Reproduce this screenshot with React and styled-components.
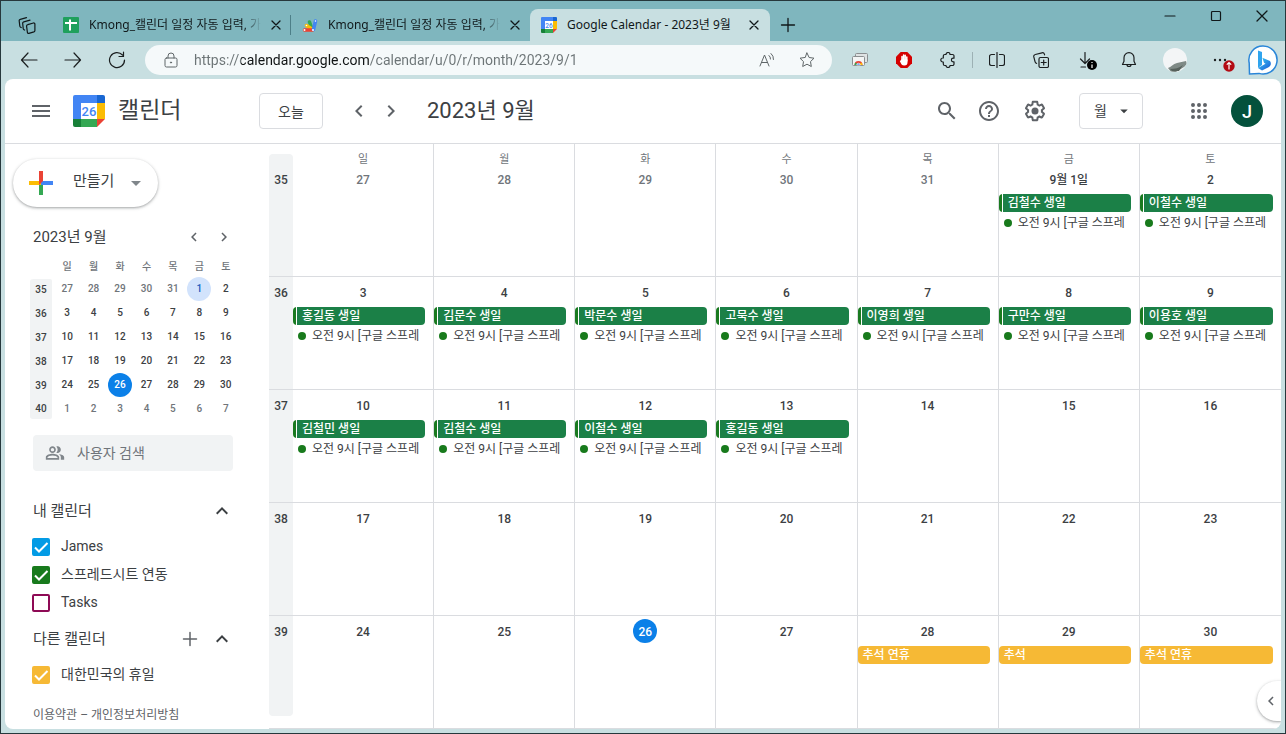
import React from "react";
import styled, { createGlobalStyle } from "styled-components";

const GlobalStyle = createGlobalStyle`
  * { box-sizing: border-box; }
  body { margin: 0; font-family: Roboto, "Noto Sans CJK KR", sans-serif; color: #3c4043; }
  button, input, select { font: inherit; color: inherit; }
  button { border: 0; padding: 0; background: none; cursor: pointer; }
  svg { display: block; flex: none; }
`;

/* ---------- browser window ---------- */

const Window = styled.div`
  display: flex;
  flex-direction: column;
  min-height: 100vh;
  border: 1px solid #26383c;
  background: #c8dfe1;
`;

const TabStrip = styled.div`
  display: flex;
  align-items: stretch;
  height: 40px;
  background: #7fb6be;
  color: #10181a;
  font: 12px/16px "Noto Sans", "Noto Sans CJK KR", sans-serif;
`;

const StripButton = styled.button`
  display: grid;
  place-items: center;
  width: ${(p) => p.$width}px;
`;

const WorkspaceButton = styled(StripButton)`
  padding-top: 8px;
`;

const NewTabButton = styled(StripButton)`
  padding-top: 8px;
`;

const Tab = styled.div`
  display: flex;
  align-items: center;
  gap: 10px;
  flex: 0 1 ${(p) => (p.$active ? 240 : 239)}px;
  min-width: 0;
  margin-top: ${(p) => (p.$active ? 8 : 0)}px;
  padding: ${(p) => (p.$active ? "0 11px" : "8px 10px 0 11px")};
  border-radius: 8px 8px 0 0;
  background: ${(p) => (p.$active ? "#c8dfe1" : "transparent")};
`;

const TabTitle = styled.span`
  flex: 1;
  overflow: hidden;
  white-space: nowrap;
  mask-image: ${(p) => (p.$fade ? "linear-gradient(to right, #000 90%, transparent 100%)" : "none")};
`;

const TabDivider = styled.div`
  width: 1px;
  height: 20px;
  margin: 14px 0 0 -1px;
  background: #4d7f88;
`;

const WindowControls = styled.div`
  display: flex;
  height: 30px;
  margin-left: auto;
`;

const Toolbar = styled.div`
  display: flex;
  align-items: center;
  height: 38px;
  padding-left: 6px;
  color: #1b1f20;
`;

const ToolButton = styled.button`
  position: relative;
  display: grid;
  place-items: center;
  flex: none;
  width: ${(p) => p.$width || 44}px;
  height: 36px;
`;

const ToolDivider = styled.div`
  width: 1px;
  height: 16px;
  margin: 0 2px;
  background: #9db1b4;
`;

const Badge = styled.span`
  position: absolute;
  left: ${(p) => p.$left || 22}px;
  top: 18px;
`;

const AddressBar = styled.div`
  display: flex;
  align-items: center;
  flex: 1;
  min-width: 0;
  height: 30px;
  margin: 0 6px;
  padding: 0 17px 0 18px;
  border-radius: 15px;
  background: #f5f9fa;
  color: #5f6668;
`;

const AddressInput = styled.input`
  flex: 1;
  min-width: 0;
  margin: 0 15px;
  padding: 0;
  border: 0;
  outline: 0;
  font: 14px/20px Roboto, sans-serif;
  color: transparent;
  background: linear-gradient(to right, #6c7476 47px, #101415 47px, #101415 176px, #6c7476 176px);
  background-clip: text;
  -webkit-background-clip: text;
`;

const AddressAction = styled.button`
  display: grid;
  place-items: center;
  width: 16px;
  height: 24px;
  margin-left: ${(p) => p.$gap || 0}px;
`;

/* ---------- calendar page ---------- */

const Page = styled.div`
  position: relative;
  display: flex;
  flex-direction: column;
  flex: 1;
  margin: 0 4px 4px;
  border-radius: 8px;
  background: #fff;
  overflow: hidden;
`;

const Header = styled.header`
  display: flex;
  align-items: center;
  height: 65px;
  border-bottom: 1px solid #dadce0;
  color: #5f6368;
`;

const Brand = styled.div`
  display: flex;
  align-items: center;
  flex: none;
  width: 254px;
  padding-left: 12px;
`;

const BrandName = styled.span`
  margin-left: 13px;
  font-size: 23px;
  line-height: 28px;
  color: #3c4043;
`;

const IconButton = styled.button`
  display: grid;
  place-items: center;
  flex: none;
  width: ${(p) => p.$size}px;
  height: ${(p) => p.$size}px;
  color: ${(p) => p.$color || "#5f6368"};
`;

const LogoSlot = styled.span`
  margin-left: 8px;
`;

const TodayButton = styled.button`
  width: 64px;
  height: 36px;
  border: 1px solid #dadce0;
  border-radius: 4px;
  font-size: 14px;
  color: #3c4043;
`;

const Pager = styled.div`
  display: flex;
  margin: 0 20px;
`;

const MonthTitle = styled.h1`
  flex: 1;
  margin: 0;
  font-size: 22px;
  line-height: 28px;
  font-weight: 400;
  white-space: nowrap;
  color: #3c4043;
`;

const HeaderActions = styled.div`
  display: grid;
  grid-template-columns: 42px 46px 40px;
  margin-right: 24px;
`;

const ViewPicker = styled.div`
  display: grid;
  align-items: center;
  width: 64px;
  margin-right: 36px;
  color: #3c4043;

  > * { grid-area: 1 / 1; }
  > svg { justify-self: end; margin-right: 10px; pointer-events: none; }
`;

const ViewSelect = styled.select`
  appearance: none;
  width: 100%;
  height: 36px;
  padding: 0 14px;
  border: 1px solid #dadce0;
  border-radius: 4px;
  background: #fff;
  font-size: 14px;
`;

const Account = styled.button`
  width: 32px;
  height: 32px;
  margin: 0 18px 0 12px;
  border-radius: 50%;
  background: #04513c;
  color: #fff;
  font-size: 18px;
  font-weight: 500;
`;

const Body = styled.div`
  display: flex;
  flex: 1;
`;

const Sidebar = styled.aside`
  flex: none;
  width: 264px;
  padding: 15px 30px 0 25px;
`;

const CreateButton = styled.button`
  display: flex;
  align-items: center;
  width: 145px;
  height: 48px;
  margin-left: -17px;
  padding-left: 12px;
  border-radius: 24px;
  background: #fff;
  box-shadow: 0 1px 2px rgba(60, 64, 67, 0.3), 0 1px 3px 1px rgba(60, 64, 67, 0.15);
  font-size: 15px;
  line-height: 20px;
  color: #3c4043;
`;

const CreateLabel = styled.span`
  flex: 1;
  margin-left: 16px;
  padding-bottom: 4px;
  text-align: left;
`;

const CreateCaret = styled.span`
  margin-right: 10px;
  color: #80868b;
`;

const MiniHeader = styled.div`
  display: flex;
  align-items: center;
  height: 28px;
  margin: 16px 0 0 3px;
`;

const MiniTitle = styled.h2`
  flex: 1;
  margin: 0;
  font-size: 15px;
  line-height: 20px;
  font-weight: 400;
`;

const MiniTable = styled.table`
  width: 100%;
  table-layout: fixed;
  border-spacing: 0;
  text-align: center;
  font-size: 10px;
  line-height: 24px;
  font-weight: 500;

  th, td { padding: 0; }
  thead th { height: 26px; padding-top: 6px; font-weight: 500; line-height: 20px; color: #70757a; }
  thead th:first-child { width: 24px; }
`;

const MiniWeek = styled.th`
  border: 0 solid transparent;
  border-right-width: 2px;
  background: #f1f3f4;
  background-clip: padding-box;
  font-weight: 500;

  && { padding-top: 2px; line-height: 22px; }
  tr:first-child > && { border-top-width: 2px; border-radius: 4px 4px 0 0; padding-top: 0; }
  tr:last-child > && { border-bottom-width: 2px; border-radius: 0 0 4px 4px; padding-top: 2px; line-height: 20px; }
`;

const miniTone = {
  plain: { bg: "transparent", fg: "#3c4043" },
  muted: { bg: "transparent", fg: "#70757a" },
  selected: { bg: "#d2e3fc", fg: "#185abc" },
  today: { bg: "#0b80e8", fg: "#fff" },
};

const MiniDay = styled.button`
  display: block;
  width: 24px;
  height: 24px;
  margin: 0 auto;
  border-radius: 50%;
  background: ${(p) => miniTone[p.$tone].bg};
  color: ${(p) => miniTone[p.$tone].fg};
`;

const PeopleSearch = styled.label`
  display: flex;
  align-items: center;
  gap: 12px;
  width: 200px;
  height: 36px;
  margin: 14px 0 24px 3px;
  padding-left: 12px;
  border-radius: 4px;
  background: #f1f3f4;
  color: #80868b;
`;

const PeopleInput = styled.input`
  flex: 1;
  min-width: 0;
  padding: 0;
  border: 0;
  outline: 0;
  background: none;
  font-size: 14px;
  &::placeholder { color: #70757a; opacity: 1; }
`;

const SectionHeader = styled.div`
  display: flex;
  align-items: center;
  height: 32px;
  margin: 0 0 6px 3px;
  padding-right: 1px;
`;

const SectionTitle = styled.h2`
  flex: 1;
  margin: 0;
  font-size: 15px;
  line-height: 20px;
  font-weight: 400;
`;

const CalendarList = styled.ul`
  margin: 0 0 6px;
  padding: 0 0 0 2px;
  list-style: none;
`;

const CalendarItem = styled.label`
  display: flex;
  align-items: center;
  gap: 11px;
  height: 28px;
  font-size: 14px;
  line-height: 20px;
`;

const CalendarName = styled.span`
  padding-bottom: 2px;
`;

const CheckSlot = styled.span`
  display: grid;
  > * { grid-area: 1 / 1; }
  > svg { pointer-events: none; }
`;

const CheckInput = styled.input`
  appearance: none;
  width: 18px;
  height: 18px;
  margin: 0;
  border: 2px solid ${(p) => p.$color};
  border-radius: 2px;
  &:checked { background: ${(p) => p.$color}; }
  &:not(:checked) + svg { visibility: hidden; }
`;

const Legal = styled.div`
  margin: 18px 0 6px 3px;
  font-size: 12px;
  line-height: 16px;
  white-space: nowrap;
  color: #5f6368;
  a { color: inherit; text-decoration: none; }
`;

/* ---------- month grid ---------- */

const MonthPane = styled.main`
  flex: 1;
  min-width: 0;
`;

const MonthTable = styled.table`
  width: 100%;
  table-layout: fixed;
  border-spacing: 0;

  th, td { padding: 0; vertical-align: top; }
`;

const WeekColumn = styled.col`
  width: 24px;
`;

const DayHead = styled.th`
  height: 20px;
  border-right: 1px solid #dadce0;
  font-size: 11px;
  line-height: 8px;
  font-weight: 400;
  color: #70757a;
  && { padding-top: 12px; }
  &:last-child { border-right: 0; }
`;

const WeekHead = styled.th`
  && { padding-top: 10px; }
`;

const WeekCap = styled.div`
  height: 10px;
  border-radius: 4px 4px 0 0;
  background: #f1f3f4;
`;

const WeekCell = styled.th`
  border-bottom: 1px solid #dadce0;
`;

const WeekNumber = styled.div`
  height: 112px;
  padding-top: 4px;
  background: #f1f3f4;
  font-size: 12px;
  line-height: 24px;
  font-weight: 500;

  tr:last-child & { height: 100px; border-radius: 0 0 4px 4px; }
`;

const DayCell = styled.td`
  height: 113px;
  border-right: 1px solid #dadce0;
  border-bottom: 1px solid #dadce0;
  &:last-child { border-right: 0; }
`;

const DayNumber = styled.div`
  width: max-content;
  min-width: 24px;
  height: 24px;
  margin: 3px auto;
  border-radius: 12px;
  text-align: center;
  font-size: 12px;
  line-height: 26px;
  font-weight: 500;
  color: ${(p) => (p.$today ? "#fff" : p.$muted ? "#70757a" : "#3c4043")};
  background: ${(p) => (p.$today ? "#0b80e8" : "transparent")};
`;

const EventChip = styled.button`
  display: block;
  width: calc(100% - 8px);
  height: 18px;
  margin-bottom: 2px;
  padding-left: ${(p) => (p.$holiday ? 5 : 9)}px;
  border-radius: 4px;
  background: ${(p) =>
    p.$holiday
      ? "#f6b935"
      : "linear-gradient(to right, #1a7a20 3px, #fff 3px, #fff 4px, #1b8047 4px)"};
  color: #fff;
  font-size: 12px;
  line-height: 16px;
  font-weight: 500;
  text-align: left;
`;

const TimedEvent = styled.button`
  display: flex;
  align-items: center;
  gap: 6px;
  width: calc(100% - 8px);
  height: 18px;
  padding: 0 4px 0 5px;
  font-size: 12px;
  line-height: 16px;
  text-align: left;

  &::before {
    content: "";
    flex: none;
    width: 8px;
    height: 8px;
    border-radius: 50%;
    background: #187a1c;
  }
`;

const TimedText = styled.span`
  overflow: hidden;
  white-space: nowrap;
`;

const PanelToggle = styled.button`
  position: absolute;
  right: 0;
  bottom: 8px;
  display: grid;
  place-items: center;
  width: 24px;
  height: 40px;
  padding-left: 4px;
  border-radius: 20px 0 0 20px;
  background: #fff;
  box-shadow: 0 1px 2px rgba(60, 64, 67, 0.3), 0 1px 3px 1px rgba(60, 64, 67, 0.15);
  color: #5f6368;
`;

/* ---------- icons ---------- */

const Material = ({ d, size = 24, children }) => (
  <svg width={size} height={size} viewBox="0 0 24 24" fill="currentColor" aria-hidden="true">
    <path d={d} />
    {children}
  </svg>
);

const Line = ({ d, size = 16, width = 1.2, children }) => (
  <svg width={size} height={size} viewBox={`0 0 ${size} ${size}`} fill="none" stroke="currentColor"
    strokeWidth={width} strokeLinecap="round" strokeLinejoin="round" aria-hidden="true">
    <path d={d} />
    {children}
  </svg>
);

const paths = {
  menu: "M3 18h18v-2H3v2zm0-5h18v-2H3v2zm0-7v2h18V6H3z",
  left: "M15.41 7.41 14 6l-6 6 6 6 1.41-1.41L10.83 12z",
  right: "M10 6 8.59 7.41 13.17 12l-4.58 4.59L10 18l6-6z",
  up: "M12 8l-6 6 1.41 1.41L12 10.83l4.59 4.58L18 14z",
  caret: "M7 10l5 5 5-5z",
  search:
    "M15.5 14h-.79l-.28-.27C15.41 12.59 16 11.11 16 9.5 16 5.91 13.09 3 9.5 3S3 5.91 3 9.5 5.91 16 9.5 16c1.61 0 3.09-.59 4.23-1.57l.27.28v.79l5 4.99L20.49 19l-4.99-5zm-6 0C7.01 14 5 11.99 5 9.5S7.01 5 9.5 5 14 7.01 14 9.5 11.99 14 9.5 14z",
  help:
    "M11 18h2v-2h-2v2zm1-16C6.48 2 2 6.48 2 12s4.48 10 10 10 10-4.48 10-10S17.52 2 12 2zm0 18c-4.41 0-8-3.59-8-8s3.59-8 8-8 8 3.59 8 8-3.59 8-8 8zm0-14c-2.21 0-4 1.79-4 4h2c0-1.1.9-2 2-2s2 .9 2 2c0 2-3 1.75-3 5h2c0-2.25 3-2.5 3-5 0-2.21-1.79-4-4-4z",
  settings:
    "M13.85 22.25h-3.7c-.74 0-1.36-.54-1.45-1.27l-.27-1.89c-.27-.14-.53-.29-.79-.46l-1.8.72c-.7.26-1.47-.03-1.81-.65L2.2 15.53c-.35-.66-.2-1.44.36-1.88l1.53-1.19c-.01-.15-.02-.3-.02-.46 0-.15.01-.31.02-.46l-1.52-1.19c-.59-.45-.74-1.26-.37-1.88l1.85-3.19c.34-.62 1.11-.9 1.79-.63l1.81.73c.26-.17.52-.32.78-.46l.27-1.91c.09-.7.71-1.25 1.44-1.25h3.7c.74 0 1.36.54 1.45 1.27l.27 1.89c.27.14.53.29.79.46l1.8-.72c.71-.26 1.48.03 1.82.65l1.84 3.18c.36.66.2 1.44-.36 1.88l-1.52 1.19c.01.15.02.3.02.46s-.01.31-.02.46l1.52 1.19c.56.45.72 1.23.37 1.86l-1.86 3.22c-.34.62-1.11.9-1.8.63l-1.8-.72c-.26.17-.52.32-.78.46l-.27 1.91c-.1.68-.72 1.22-1.46 1.22zm-3.23-2h2.76l.37-2.55.53-.22c.44-.18.88-.44 1.34-.78l.45-.34 2.38.96 1.38-2.4-2.03-1.58.07-.56c.03-.26.06-.51.06-.78s-.03-.53-.06-.78l-.07-.56 2.03-1.58-1.39-2.4-2.39.96-.45-.35c-.42-.32-.87-.58-1.33-.77l-.52-.22-.37-2.55h-2.76l-.37 2.55-.53.21c-.44.19-.88.44-1.34.79l-.45.33-2.38-.95-1.39 2.39 2.03 1.58-.07.56a7 7 0 0 0-.06.79c0 .26.02.53.06.78l.07.56-2.03 1.58 1.38 2.4 2.39-.96.45.35c.43.33.86.58 1.33.77l.53.22.38 2.55z",
  apps:
    "M6 8a2 2 0 1 0 0-4 2 2 0 0 0 0 4zm6 12a2 2 0 1 0 0-4 2 2 0 0 0 0 4zm-6 0a2 2 0 1 0 0-4 2 2 0 0 0 0 4zm0-6a2 2 0 1 0 0-4 2 2 0 0 0 0 4zm6 0a2 2 0 1 0 0-4 2 2 0 0 0 0 4zm6-10a2 2 0 1 0 0 4 2 2 0 0 0 0-4zm-6 4a2 2 0 1 0 0-4 2 2 0 0 0 0 4zm6 6a2 2 0 1 0 0-4 2 2 0 0 0 0 4zm0 6a2 2 0 1 0 0-4 2 2 0 0 0 0 4z",
  people:
    "M16.67 13.13C18.04 14.06 19 15.32 19 17v3h4v-3c0-2.18-3.57-3.47-6.33-3.87zM15 12c2.21 0 4-1.79 4-4s-1.79-4-4-4c-.47 0-.91.1-1.33.24a5.98 5.98 0 0 1 0 7.52c.42.14.86.24 1.33.24zM9 12c2.21 0 4-1.79 4-4s-1.79-4-4-4-4 1.79-4 4 1.79 4 4 4zm0-6c1.1 0 2 .9 2 2s-.9 2-2 2-2-.9-2-2 .9-2 2-2zm0 7c-2.67 0-8 1.34-8 4v3h16v-3c0-2.66-5.33-4-8-4zm6 5H3v-.99C3.2 16.29 6.3 15 9 15s5.8 1.29 6 2v1z",
};

const CalendarLogo = ({ size }) => (
  <svg width={size} height={size} viewBox="0 0 32 32" aria-hidden="true">
    <path fill="#4285f4" d="M2 0h22v8H8v16H0V2a2 2 0 0 1 2-2z" />
    <path fill="#1967d2" d="M24 0h6a2 2 0 0 1 2 2v6h-8z" />
    <path fill="#fbbc04" d="M24 8h8v16h-8z" />
    <path fill="#34a853" d="M8 24h16v8H8z" />
    <path fill="#188038" d="M0 24h8v8H2a2 2 0 0 1-2-2z" />
    <path fill="#ea4335" d="M24 24h8l-8 8z" />
    <path fill="#fff" d="M8 8h16v16H8z" />
    <text x="16" y="21" textAnchor="middle" fontFamily="Roboto, sans-serif" fontSize="13" fontWeight="500" fill="#4285f4">26</text>
  </svg>
);

const SheetsLogo = () => (
  <svg width="16" height="16" viewBox="0 0 16 16" aria-hidden="true">
    <rect width="16" height="16" rx="1" fill="#1fa05d" />
    <path fill="#fff" d="M6 2.5h2V5h6v2H8v6.500H6V7H2V5h4z" />
  </svg>
);

const ScriptLogo = () => (
  <svg width="16" height="16" viewBox="0 0 16 16" strokeLinecap="round" strokeWidth="3.500" aria-hidden="true">
    <path stroke="#34a853" d="M7.500 5l2.500 7" />
    <path stroke="#fbbc04" d="M4.500 8.500l6 4" />
    <path stroke="#ea4335" d="M2.500 13h8" />
    <path stroke="#4285f4" d="M13.500 4l-2 8.500" />
    <circle cx="11" cy="13" r="1" fill="#fff" />
    <circle cx="2.500" cy="13" r="1" fill="#fff" />
    <circle cx="4.500" cy="8.500" r=".8" fill="#fff" />
    <circle cx="13.500" cy="4" r=".8" fill="#fff" />
  </svg>
);

const CaptureLogo = () => (
  <svg width="16" height="16" viewBox="0 0 16 16" fill="none" aria-hidden="true">
    <rect x="3.500" y="1.500" width="12" height="9" rx="1" fill="#dfe3e4" stroke="#8b8f91" />
    <rect x=".5" y="4.500" width="12" height="9" rx="1" fill="#f3f5f5" stroke="#8b8f91" />
    <path d="M2.500 13a4 4 0 0 1 8 0z" fill="#ea4335" />
    <path d="M2.500 13a4 4 0 0 1 1-2.600l3 2.600z" fill="#34a853" />
    <path d="M10.500 13a4 4 0 0 0-1-2.600l-3 2.600z" fill="#fbbc04" />
    <path d="M4.700 13a1.800 1.800 0 0 1 3.600 0z" fill="#4285f4" stroke="#fff" strokeWidth=".6" />
  </svg>
);

const BlockerLogo = () => (
  <svg width="16" height="16" viewBox="0 0 16 16" aria-hidden="true">
    <path d="M4.700 0h6.600L16 4.700v6.600L11.300 16H4.700L0 11.300V4.700z" fill="#d50000" />
    <path d="M6 9V4.500M7.600 8V3M9.200 8V3.300M10.800 9V5" stroke="#fff" strokeWidth="1.500" strokeLinecap="round" />
    <path d="M5.300 7.500h6.200v3a3 3 0 0 1-3 3H8c-1.500 0-2.500-.8-3-2L3.800 8.900l.8-.5z" fill="#fff" />
  </svg>
);

const BingLogo = () => (
  <svg width="30" height="30" viewBox="0 0 30 30" aria-hidden="true">
    <defs>
      <linearGradient id="bing-b" x1="0" y1="0" x2="1" y2="1">
        <stop offset="0" stopColor="#3ad0f4" />
        <stop offset="1" stopColor="#1a55d6" />
      </linearGradient>
    </defs>
    <path d="M15 1a14 14 0 1 1-4 27.400L1.500 29 1.200 18A14 14 0 0 1 15 1z" fill="#fff" stroke="#2a86d8" strokeWidth="1.500" />
    <path d="M10 5.500l4 1.600v13l-4 3z" fill="#2fa4ee" />
    <path d="M14.500 20.500l3-1.700-1.500-1-1.600-5 7.600 3.300c1.600 2.300 1 4.700-1 5.900L14 25.500l-4-2.400z" fill="url(#bing-b)" />
  </svg>
);

const Workspaces = () => (
  <Line size={18} d="M9.800 8.600 15.400 7a1.200 1.200 0 0 1 1.500 1.200v6.300a1.500 1.500 0 0 1-1 1.400l-5 1.500a1.200 1.200 0 0 1-1.500-1L8.600 10.300a1.500 1.500 0 0 1 1.200-1.700zM6.600 14l-.6-.3a1.500 1.500 0 0 1-.8-1.200L4.700 7.500a1.500 1.500 0 0 1 1.100-1.700L12 4.100M3.200 11.500l-.6-.3a1.500 1.500 0 0 1-.8-1.200L1.200 5a1.500 1.500 0 0 1 1.100-1.700l6.200-1.700" />
);

const CloseMark = ({ size = 10 }) => <Line size={size} width={1.3} d={`M1 1l${size - 2} ${size - 2}M${size - 1} 1L1 ${size - 1}`} />;

const CreatePlus = () => (
  <svg width="32" height="32" viewBox="0 0 32 32" aria-hidden="true">
    <path fill="#34a853" d="M14 16h4v12h-4z" />
    <path fill="#4285f4" d="M16 14h12v4H16z" />
    <path fill="#fbbc04" d="M4 14h12v4H4z" />
    <path fill="#ea4335" d="M14 4h4v10l-4 4z" />
  </svg>
);

/* ---------- data ---------- */

const weekdays = ["일", "월", "화", "수", "목", "금", "토"];

const miniWeeks = [
  [35, [27, 28, 29, 30, 31, 1, 2]],
  [36, [3, 4, 5, 6, 7, 8, 9]],
  [37, [10, 11, 12, 13, 14, 15, 16]],
  [38, [17, 18, 19, 20, 21, 22, 23]],
  [39, [24, 25, 26, 27, 28, 29, 30]],
  [40, [1, 2, 3, 4, 5, 6, 7]],
];

const birthdays = {
  1: "김철수", 2: "이철수", 3: "홍길동", 4: "김문수", 5: "박문수", 6: "고묵수", 7: "이영희",
  8: "구만수", 9: "이용호", 10: "김철민", 11: "김철수", 12: "이철수", 13: "홍길동",
};

const holidays = { 28: "추석 연휴", 29: "추석", 30: "추석 연휴" };

const isOutside = (week, day) => (week === 35 && day > 20) || week === 40;

const toneOf = (week, day) => {
  if (isOutside(week, day)) return "muted";
  if (day === 1) return "selected";
  return day === 26 ? "today" : "plain";
};

/* ---------- parts ---------- */

function BrowserTab({ icon, title, active }) {
  return (
    <Tab $active={active}>
      {icon}
      <TabTitle $fade={!active}>{title}</TabTitle>
      <StripButton $width={10} aria-label="탭 닫기"><CloseMark /></StripButton>
    </Tab>
  );
}

function BrowserChrome() {
  return (
    <>
      <TabStrip>
        <WorkspaceButton $width={51} aria-label="작업 영역"><Workspaces /></WorkspaceButton>
        <BrowserTab icon={<SheetsLogo />} title="Kmong_캘린더 일정 자동 입력, 가" />
        <TabDivider />
        <BrowserTab icon={<ScriptLogo />} title="Kmong_캘린더 일정 자동 입력, 가" />
        <BrowserTab icon={<CalendarLogo size={16} />} title="Google Calendar - 2023년 9월" active />
        <NewTabButton $width={36} aria-label="새 탭"><Line d="M8 1.500v13M1.500 8h13" width={1.3} /></NewTabButton>
        <WindowControls>
          <StripButton $width={46} aria-label="최소화"><Line size={12} d="M1 6h10" /></StripButton>
          <StripButton $width={46} aria-label="최대화">
            <Line size={12} d="M2.500 1.500h7a1 1 0 0 1 1 1v7a1 1 0 0 1-1 1h-7a1 1 0 0 1-1-1v-7a1 1 0 0 1 1-1z" />
          </StripButton>
          <StripButton $width={46} aria-label="닫기"><CloseMark size={12} /></StripButton>
        </WindowControls>
      </TabStrip>
      <Toolbar>
        <ToolButton aria-label="뒤로"><Line size={18} d="M17 9H1.500M8 2 1.500 9 8 16" /></ToolButton>
        <ToolButton aria-label="앞으로"><Line size={18} d="M1 9h15.500M10 2l6.500 7-6.500 7" /></ToolButton>
        <ToolButton aria-label="새로 고침"><Line size={18} d="M16.500 9A7.500 7.500 0 1 1 14.500 4M15.500 1v4.500H11" /></ToolButton>
        <AddressBar>
          <Line width={1} d="M3.500 6h9a1.500 1.500 0 0 1 1.500 1.500v6a1.500 1.500 0 0 1-1.500 1.500h-9A1.500 1.500 0 0 1 2 13.500v-6A1.500 1.500 0 0 1 3.500 6zM5 6V4a3 3 0 0 1 6 0v2">
            <circle cx="8" cy="10.500" r=".6" fill="currentColor" />
          </Line>
          <AddressInput aria-label="주소" defaultValue="https://calendar.google.com/calendar/u/0/r/month/2023/9/1" />
          <AddressAction aria-label="소리내어 읽기">
            <Line width={1} d="M1 14 5.500 3 10 14M2.500 10.500h6M10 3.500a4 4 0 0 1 1.500 3.500M12 1.500a7 7 0 0 1 2.500 6" />
          </AddressAction>
          <AddressAction $gap={24} aria-label="즐겨찾기">
            <Line width={1} d="M8 1l2.100 4.500 4.900.7-3.500 3.400.8 4.900L8 12.200l-4.300 2.300.8-4.900L1 6.200l4.900-.7z" />
          </AddressAction>
        </AddressBar>
        <ToolButton aria-label="화면 캡처"><CaptureLogo /></ToolButton>
        <ToolButton aria-label="광고 차단"><BlockerLogo /></ToolButton>
        <ToolButton aria-label="확장">
          <Line d="M4.800 2.500H6a2 2 0 0 1 4 0h2.500A1.500 1.500 0 0 1 14 4v2.200h-.8a1.800 1.800 0 0 0 0 3.600h.8V12a1.500 1.500 0 0 1-1.500 1.500H10a2 2 0 0 1-4 0H4.800A1.500 1.500 0 0 1 3.300 12v-2h-.5a2 2 0 0 1 0-4h.5V4a1.500 1.500 0 0 1 1.500-1.500z" />
        </ToolButton>
        <ToolDivider />
        <ToolButton aria-label="화면 분할">
          <Line d="M8 .5v15M5.500 2.500H2.500a2 2 0 0 0-2 2v7a2 2 0 0 0 2 2h3M10.500 2.500h3a2 2 0 0 1 2 2v7a2 2 0 0 1-2 2h-3" />
        </ToolButton>
        <ToolButton aria-label="컬렉션">
          <Line d="M7.500 5.500h6.500a1.500 1.500 0 0 1 1.500 1.500v7a1.500 1.500 0 0 1-1.500 1.500H7.500A1.500 1.500 0 0 1 6 14V7a1.500 1.500 0 0 1 1.500-1.500zM10.700 8v5M8.200 10.500h5M11.600 2.800l-.2-.7A2 2 0 0 0 9 .8L2.300 2.500A2 2 0 0 0 .8 4.900l1.300 4.900a2 2 0 0 0 1.500 1.500" />
        </ToolButton>
        <ToolButton aria-label="다운로드">
          <Line d="M8 .5v10.500M3.500 7 8 11.500 12.500 7M4 15h4.500" />
          <Badge $left={24}>
            <svg width="10" height="10" viewBox="0 0 10 10"><circle cx="5" cy="5" r="5" fill="#000" /><path d="M5 2v1M5 4.500V8" stroke="#fff" strokeWidth="1.200" /></svg>
          </Badge>
        </ToolButton>
        <ToolButton aria-label="알림">
          <Line d="M8 .7a5 5 0 0 1 5 5v3.500l1.500 3.300h-13L3 9.200V5.700a5 5 0 0 1 5-5zM6 12.500a2 2 0 0 0 4 0" />
        </ToolButton>
        <ToolButton $width={48} aria-label="프로필">
          <svg width="24" height="24" viewBox="0 0 24 24">
            <defs><clipPath id="profile-disc"><circle cx="12" cy="12" r="12" /></clipPath></defs>
            <g clipPath="url(#profile-disc)">
              <path fill="#f3f5f6" d="M0 0h24v24H0z" />
              <path fill="#7f8a86" d="M5 20c3-1 5-4 9-5l9-2 1 3-3 3-8 5H8z" />
              <path fill="#56615c" d="M7 21c5 0 9-1 13-4l-4 6H9z" />
            </g>
          </svg>
        </ToolButton>
        <ToolButton $width={42} aria-label="설정 및 기타">
          <svg width="16" height="4" viewBox="0 0 16 4" fill="currentColor"><circle cx="3" cy="2" r="1.200" /><circle cx="8" cy="2" r="1.200" /><circle cx="13" cy="2" r="1.200" /></svg>
          <Badge $left={24}>
            <svg width="12" height="12" viewBox="0 0 12 12"><circle cx="6" cy="6" r="5.700" fill="#b30b14" /><path d="M6 9.500v-7M3.800 4.700 6 2.500l2.200 2.200" stroke="#fff" fill="none" strokeWidth="1.200" /></svg>
          </Badge>
        </ToolButton>
        <ToolButton aria-label="Bing"><BingLogo /></ToolButton>
      </Toolbar>
    </>
  );
}

function PageHeader() {
  return (
    <Header>
      <Brand>
        <IconButton $size={48} aria-label="기본 메뉴"><Material d={paths.menu} /></IconButton>
        <LogoSlot><CalendarLogo size={32} /></LogoSlot>
        <BrandName>캘린더</BrandName>
      </Brand>
      <TodayButton>오늘</TodayButton>
      <Pager>
        <IconButton $size={32} aria-label="이전 달"><Material d={paths.left} /></IconButton>
        <IconButton $size={32} aria-label="다음 달"><Material d={paths.right} /></IconButton>
      </Pager>
      <MonthTitle>2023년 9월</MonthTitle>
      <HeaderActions>
        <IconButton $size={40} aria-label="검색"><Material d={paths.search} /></IconButton>
        <IconButton $size={40} aria-label="지원"><Material d={paths.help} /></IconButton>
        <IconButton $size={40} aria-label="설정">
          <Material d={paths.settings}><circle cx="12" cy="12" r="3.500" /></Material>
        </IconButton>
      </HeaderActions>
      <ViewPicker>
        <ViewSelect aria-label="보기" defaultValue="월">
          <option>월</option>
        </ViewSelect>
        <Material d={paths.caret} size={18} />
      </ViewPicker>
      <IconButton $size={40} aria-label="Google 앱"><Material d={paths.apps} /></IconButton>
      <Account aria-label="계정">J</Account>
    </Header>
  );
}

function MiniCalendar() {
  return (
    <>
      <MiniHeader>
        <MiniTitle>2023년 9월</MiniTitle>
        <IconButton $size={30} aria-label="이전 달"><Material d={paths.left} size={18} /></IconButton>
        <IconButton $size={30} aria-label="다음 달"><Material d={paths.right} size={18} /></IconButton>
      </MiniHeader>
      <MiniTable>
        <thead>
          <tr>
            <th />
            {weekdays.map((d) => <th key={d} scope="col">{d}</th>)}
          </tr>
        </thead>
        <tbody>
          {miniWeeks.map(([week, days]) => (
            <tr key={week}>
              <MiniWeek scope="row">{week}</MiniWeek>
              {days.map((day) => (
                <td key={day}><MiniDay $tone={toneOf(week, day)}>{day}</MiniDay></td>
              ))}
            </tr>
          ))}
        </tbody>
      </MiniTable>
    </>
  );
}

function CalendarToggle({ name, color, on }) {
  return (
    <li>
      <CalendarItem>
        <CheckSlot>
          <CheckInput type="checkbox" defaultChecked={on} $color={color} />
          <svg width="18" height="18" viewBox="0 0 18 18" fill="none" stroke="#fff" strokeWidth="2"><path d="M3 9.500l4 4L15.500 5" /></svg>
        </CheckSlot>
        <CalendarName>{name}</CalendarName>
      </CalendarItem>
    </li>
  );
}

function SidePanel() {
  return (
    <Sidebar>
      <CreateButton>
        <CreatePlus />
        <CreateLabel>만들기</CreateLabel>
        <CreateCaret><Material d={paths.caret} /></CreateCaret>
      </CreateButton>
      <MiniCalendar />
      <PeopleSearch>
        <Material d={paths.people} size={20} />
        <PeopleInput aria-label="사용자 검색" placeholder="사용자 검색" />
      </PeopleSearch>
      <SectionHeader>
        <SectionTitle>내 캘린더</SectionTitle>
        <IconButton $size={32} $color="#3c4043" aria-label="접기"><Material d={paths.up} size={24} /></IconButton>
      </SectionHeader>
      <CalendarList>
        <CalendarToggle name="James" color="#039be5" on />
        <CalendarToggle name="스프레드시트 연동" color="#187a1c" on />
        <CalendarToggle name="Tasks" color="#8e0a55" />
      </CalendarList>
      <SectionHeader>
        <SectionTitle>다른 캘린더</SectionTitle>
        <IconButton $size={32} aria-label="다른 캘린더 추가"><Line size={16} width={1.5} d="M8 1.500v13M1.500 8h13" /></IconButton>
        <IconButton $size={32} $color="#3c4043" aria-label="접기"><Material d={paths.up} size={24} /></IconButton>
      </SectionHeader>
      <CalendarList>
        <CalendarToggle name="대한민국의 휴일" color="#f6b935" on />
      </CalendarList>
      <Legal><a href="#terms">이용약관</a> – <a href="#privacy">개인정보처리방침</a></Legal>
    </Sidebar>
  );
}

function Day({ week, day }) {
  const outside = isOutside(week, day);
  return (
    <DayCell>
      <DayNumber $muted={outside} $today={day === 26}>{day === 1 ? "9월 1일" : day}</DayNumber>
      {!outside && birthdays[day] && (
        <>
          <EventChip>{birthdays[day]} 생일</EventChip>
          <TimedEvent><TimedText>오전 9시 [구글 스프레</TimedText></TimedEvent>
        </>
      )}
      {!outside && holidays[day] && <EventChip $holiday>{holidays[day]}</EventChip>}
    </DayCell>
  );
}

function MonthGrid() {
  return (
    <MonthPane>
      <MonthTable>
        <colgroup>
          <WeekColumn />
          {weekdays.map((d) => <col key={d} />)}
        </colgroup>
        <thead>
          <tr>
            <WeekHead><WeekCap /></WeekHead>
            {weekdays.map((d) => <DayHead key={d} scope="col">{d}</DayHead>)}
          </tr>
        </thead>
        <tbody>
          {miniWeeks.slice(0, 5).map(([week, days]) => (
            <tr key={week}>
              <WeekCell scope="row"><WeekNumber>{week}</WeekNumber></WeekCell>
              {days.map((day) => <Day key={day} week={week} day={day} />)}
            </tr>
          ))}
        </tbody>
      </MonthTable>
    </MonthPane>
  );
}

export default function App() {
  return (
    <>
      <GlobalStyle />
      <Window>
        <BrowserChrome />
        <Page>
          <PageHeader />
          <Body>
            <SidePanel />
            <MonthGrid />
          </Body>
          <PanelToggle aria-label="측면 패널 표시"><Material d={paths.left} size={18} /></PanelToggle>
        </Page>
      </Window>
    </>
  );
}
